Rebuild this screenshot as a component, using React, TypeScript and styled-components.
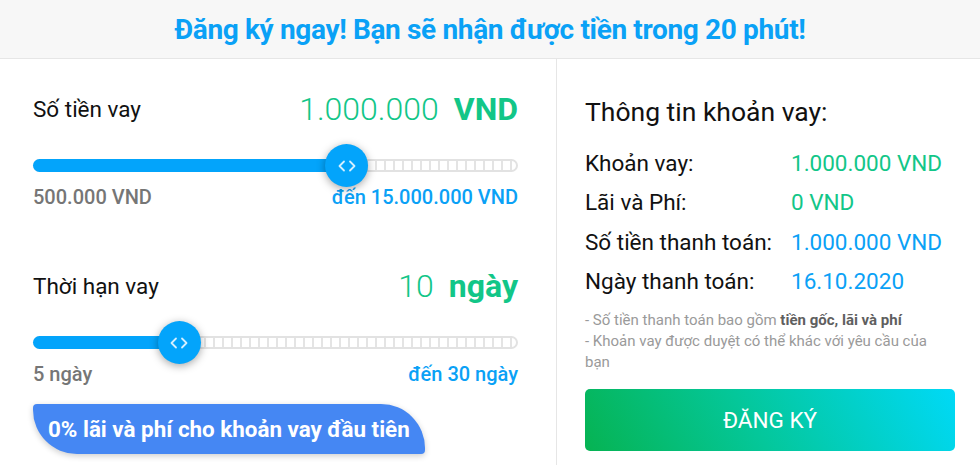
import React from 'react';
import styled, { createGlobalStyle } from 'styled-components';

const GlobalStyle = createGlobalStyle`
  html, body {
    margin: 0;
    padding: 0;
    background: #fff;
    font-family: Roboto, "Liberation Sans", sans-serif;
    color: #111;
  }
`;

const Page = styled.div`
  width: 980px;
  height: 465px;
  overflow: hidden;
  display: flex;
  flex-direction: column;
`;

const Banner = styled.div`
  height: 58px;
  flex: none;
  background: #f7f7f7;
  border-bottom: 1px solid #e6e6e6;
  display: flex;
  align-items: center;
  justify-content: center;
`;

const BannerTitle = styled.h1`
  margin: 0;
  font-size: 28px;
  font-weight: 700;
  letter-spacing: -0.35px;
  color: #0aa1f6;
`;

const Body = styled.div`
  flex: 1;
  display: flex;
`;

const LeftPane = styled.div`
  width: 557px;
  flex: none;
  box-sizing: border-box;
  padding: 0 38px 0 33px;
  border-right: 1px solid #e6e6e6;
`;

const RightPane = styled.div`
  flex: 1;
  padding: 0 25px 0 28px;
  display: flex;
  flex-direction: column;
`;

const Block = styled.div<{ $top: number }>`
  padding-top: ${p => p.$top}px;
`;

const HeadRow = styled.div`
  display: flex;
  justify-content: space-between;
  align-items: center;
  height: 36px;
`;

const Label = styled.span`
  font-size: 22.5px;
  color: #111;
`;

const BigValue = styled.span`
  font-size: 32px;
  font-weight: 300;
  color: #12c688;
  display: flex;
  gap: 15px;
  align-items: baseline;
`;

const BigUnit = styled.b`
  font-weight: 700;
`;

const Track = styled.div`
  position: relative;
  height: 13px;
  margin-top: 32px;
  border-radius: 7px;
  box-sizing: border-box;
  border: 2px solid #e2e2e2;
  background:
    repeating-linear-gradient(90deg, #fff 0 7px, #e4e4e4 7px 9px);
`;

const Fill = styled.div`
  position: absolute;
  left: -2px;
  top: -2px;
  bottom: -2px;
  background: #03a4fb;
  border-radius: 7px 0 0 7px;
`;

const Thumb = styled.div`
  position: absolute;
  top: 50%;
  width: 43px;
  height: 43px;
  margin: -21.5px 0 0 -21.5px;
  border-radius: 50%;
  background: #03a4fb;
  box-shadow: 0 2px 9px rgba(0, 0, 0, 0.35);
  display: flex;
  align-items: center;
  justify-content: center;
`;

const RangeRow = styled.div`
  display: flex;
  justify-content: space-between;
  margin-top: 14px;
  font-size: 20px;
  font-weight: 500;
  line-height: 23px;
`;

const RangeMin = styled.span`
  color: #767676;
`;

const RangeMax = styled.span`
  color: #0aa1f6;
`;

const Badge = styled.div`
  display: inline-flex;
  align-items: center;
  height: 50px;
  margin-top: 18px;
  padding: 0 15px;
  background: #4587f3;
  color: #fff;
  font-size: 22.4px;
  font-weight: 700;
  border-radius: 4px 44px 4px 44px;
  box-shadow: 0 2px 6px rgba(0, 0, 0, 0.2);
`;

const InfoTitle = styled.h2`
  margin: 38px 0 0;
  font-size: 26.5px;
  font-weight: 400;
  color: #111;
  line-height: 30px;
`;

const InfoList = styled.dl`
  margin: 16px 0 0;
  display: grid;
  grid-template-columns: 206px 1fr;
  grid-auto-rows: 39.5px;
  align-items: center;
  font-size: 22.5px;
`;

const InfoKey = styled.dt`
  color: #111;
`;

const InfoVal = styled.dd<{ $tone: 'green' | 'blue' }>`
  margin: 0;
  color: ${p => (p.$tone === 'green' ? '#12c688' : '#0aa1f6')};
`;

const Notes = styled.p`
  margin: 8.5px 0 0;
  max-width: 350px;
  font-size: 15px;
  line-height: 21px;
  color: #9a9a9a;

  b {
    color: #5f5f5f;
  }
`;

const SubmitButton = styled.button`
  margin-top: 16.5px;
  height: 62px;
  width: 370px;
  border: 0;
  border-radius: 5px;
  background: linear-gradient(60deg, #06b352 0%, #04c79a 45%, #00d9f7 100%);
  color: #fff;
  font-family: inherit;
  font-size: 22.5px;
  font-weight: 400;
  cursor: pointer;
`;

const Arrows = () => (
  <svg width="20" height="14" viewBox="0 0 20 14" fill="none" stroke="#d4efff" strokeWidth="1.8" strokeLinecap="round" strokeLinejoin="round">
    <path d="M7 2.5 2.5 7 7 11.5" />
    <path d="M13 2.5 17.5 7 13 11.5" />
  </svg>
);

interface SliderProps {
  percent: number;
}

const Slider: React.FC<SliderProps> = ({ percent }) => (
  <Track>
    <Fill style={{ width: `calc(${percent}% + 2px)` }} />
    <Thumb style={{ left: `${percent}%` }}>
      <Arrows />
    </Thumb>
  </Track>
);

const App: React.FC = () => (
  <Page>
    <GlobalStyle />
    <Banner>
      <BannerTitle>Đăng ký ngay! Bạn sẽ nhận được tiền trong 20 phút!</BannerTitle>
    </Banner>
    <Body>
      <LeftPane>
        <Block $top={32}>
          <HeadRow>
            <Label>Số tiền vay</Label>
            <BigValue>1.000.000 <BigUnit>VND</BigUnit></BigValue>
          </HeadRow>
          <Slider percent={64.8} />
          <RangeRow>
            <RangeMin>500.000 VND</RangeMin>
            <RangeMax>đến 15.000.000 VND</RangeMax>
          </RangeRow>
        </Block>
        <Block $top={59}>
          <HeadRow>
            <Label>Thời hạn vay</Label>
            <BigValue>10 <BigUnit>ngày</BigUnit></BigValue>
          </HeadRow>
          <Slider percent={30} />
          <RangeRow>
            <RangeMin>5 ngày</RangeMin>
            <RangeMax>đến 30 ngày</RangeMax>
          </RangeRow>
          <Badge>0% lãi và phí cho khoản vay đầu tiên</Badge>
        </Block>
      </LeftPane>
      <RightPane>
        <InfoTitle>Thông tin khoản vay:</InfoTitle>
        <InfoList>
          <InfoKey>Khoản vay:</InfoKey>
          <InfoVal $tone="green">1.000.000 VND</InfoVal>
          <InfoKey>Lãi và Phí:</InfoKey>
          <InfoVal $tone="green">0 VND</InfoVal>
          <InfoKey>Số tiền thanh toán:</InfoKey>
          <InfoVal $tone="blue">1.000.000 VND</InfoVal>
          <InfoKey>Ngày thanh toán:</InfoKey>
          <InfoVal $tone="blue">16.10.2020</InfoVal>
        </InfoList>
        <Notes>
          - Số tiền thanh toán bao gồm <b>tiền gốc, lãi và phí</b>
          <br />
          - Khoản vay được duyệt có thể khác với yêu cầu của bạn
        </Notes>
        <SubmitButton>ĐĂNG KÝ</SubmitButton>
      </RightPane>
    </Body>
  </Page>
);

export default App;
